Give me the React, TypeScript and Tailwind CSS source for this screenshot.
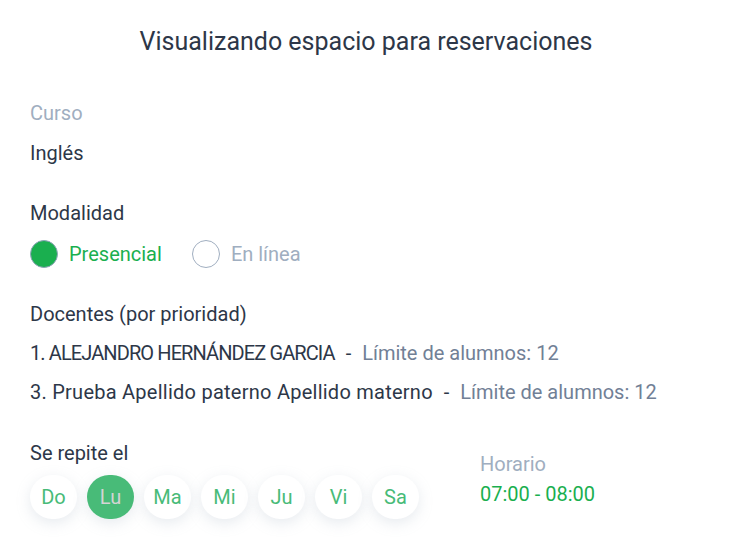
import React from "react";

const days = ["Do", "Lu", "Ma", "Mi", "Ju", "Vi", "Sa"];

export default function App() {
  return (
    <div className="w-[732px] h-[548px] bg-white text-[#2d3748] font-['Roboto',sans-serif] overflow-hidden">
      <h1 className="pt-[27px] text-center text-[25px] leading-[30px]">Visualizando espacio para reservaciones</h1>

      <div className="px-[30px] pt-[44px] text-[20px]">
        <div className="leading-[24px] text-[#a0aec0]">Curso</div>
        <div className="mt-[16px] leading-[24px]">Inglés</div>

        <div className="mt-[36px] leading-[24px]">Modalidad</div>
        <div className="mt-[14px] flex items-center gap-[11px]">
          <span className="w-[28px] h-[28px] rounded-full bg-[#1aaf4f] border border-[#8fa3b8]" />
          <span className="text-[#1aaf4f]">Presencial</span>
          <span className="ml-[19px] w-[28px] h-[28px] rounded-full bg-white border border-[#a0aec0]" />
          <span className="text-[#a0aec0]">En línea</span>
        </div>

        <div className="mt-[33px] leading-[24px]">Docentes (por prioridad)</div>
        <div className="mt-[15px] leading-[24px]">
          <span className="tracking-[-0.9px]">1. ALEJANDRO HERNÁNDEZ GARCIA</span> <span className="mx-[6px]">-</span>{" "}
          <span className="text-[#718096]">Límite de alumnos: 12</span>
        </div>
        <div className="mt-[15px] leading-[24px]">
          <span className="tracking-[0.25px]">3. Prueba Apellido paterno Apellido materno</span>{" "}
          <span className="mx-[6px]">-</span> <span className="text-[#718096]">Límite de alumnos: 12</span>
        </div>

        <div className="mt-[37px] flex">
          <div>
            <div className="leading-[24px]">Se repite el</div>
            <div className="mt-[10px] flex gap-[10px]">
              {days.map((d) => (
                <div
                  key={d}
                  className={
                    d === "Lu"
                      ? "w-[47px] h-[44px] rounded-full bg-[#48bb78] text-[#d4d4d4] flex items-center justify-center shadow-[0_4px_14px_rgba(160,174,192,0.25)]"
                      : "w-[47px] h-[44px] rounded-full bg-white text-[#48bb78] flex items-center justify-center shadow-[0_4px_14px_rgba(160,174,192,0.25)]"
                  }
                >
                  {d}
                </div>
              ))}
            </div>
          </div>
          <div className="ml-[61px] pt-[11px]">
            <div className="leading-[24px] text-[#a0aec0]">Horario</div>
            <div className="mt-[6px] leading-[24px] text-[#1aaf4f]">07:00 - 08:00</div>
          </div>
        </div>
      </div>
    </div>
  );
}
